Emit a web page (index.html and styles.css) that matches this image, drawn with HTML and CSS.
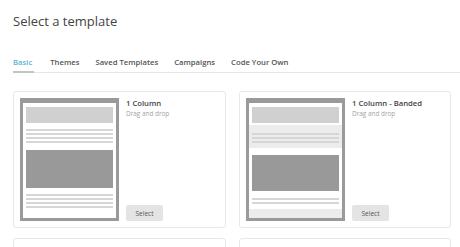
FILE: index.html
```html
<!DOCTYPE html>
<html>
<head>
<meta charset="utf-8">
<link rel="stylesheet" href="styles.css">
</head>
<body>
<h1 class="title">Select a template</h1>
<nav class="tabs">
  <span class="tab active">Basic</span>
  <span class="tab">Themes</span>
  <span class="tab">Saved Templates</span>
  <span class="tab">Campaigns</span>
  <span class="tab">Code Your Own</span>
</nav>
<div class="grid">
  <div class="card">
    <div class="thumb">
      <div class="inner">
        <div class="hdr"></div>
        <div class="lines top"><i></i><i></i><i></i><i></i></div>
        <div class="img"></div>
        <div class="lines bottom"><i></i><i></i><i></i><i></i></div>
      </div>
    </div>
    <div class="info">
      <div class="name">1 Column</div>
      <div class="desc">Drag and drop</div>
      <button class="select">Select</button>
    </div>
  </div>
  <div class="card">
    <div class="thumb">
      <div class="inner banded">
        <div class="hdr"></div>
        <div class="band"><div class="lines"><i></i><i></i><i></i></div></div>
        <div class="img b"></div>
        <div class="lines bottom2"><i></i><i></i></div>
        <div class="band foot"></div>
      </div>
    </div>
    <div class="info">
      <div class="name">1 Column - Banded</div>
      <div class="desc">Drag and drop</div>
      <button class="select">Select</button>
    </div>
  </div>
  <div class="card empty"></div>
  <div class="card empty"></div>
</div>
</body>
</html>
```
FILE: styles.css
```css
html, body {
  margin: 0;
  background: #fff;
}
body {
  padding: 0 0 0 13px;
  font-family: "Open Sans", "DejaVu Sans", sans-serif;
  color: #444;
  overflow: hidden;
}
.title {
  margin: 11px 0 0;
  font-size: 13px;
  line-height: 20px;
  font-weight: 400;
  color: #444;
}
.tabs {
  display: flex;
  margin-top: 25px;
  border-bottom: 1px solid #e6e6e6;
}
.tab {
  font-size: 7.7px;
  line-height: 12px;
  font-weight: 600;
  color: #555;
  padding-bottom: 4px;
  margin-right: 16px;
}
.tab.active {
  color: #5bb4cf;
  border-bottom: 2px solid #c4c4c4;
  margin-bottom: -1px;
  padding-bottom: 3px;
  padding-right: 2px;
}
.grid {
  display: grid;
  grid-template-columns: 213px 212px;
  column-gap: 13px;
  row-gap: 10px;
  margin-top: 18px;
}
.card {
  display: flex;
  gap: 7px;
  border: 1px solid #e8e8e8;
  border-radius: 3px;
  padding: 6px;
}
.card.empty {
  height: 123px;
}
.thumb {
  width: 99px;
  height: 123px;
  box-sizing: border-box;
  border: 3px solid #9a9a9a;
  border-top-width: 5px;
  flex: none;
}
.inner {
  height: 100%;
  background: #fff;
  padding: 4px 3px 0;
  box-sizing: border-box;
}
.hdr {
  height: 16px;
  background: #d0d0d0;
}
.lines {
  display: flex;
  flex-direction: column;
  gap: 2px;
}
.lines i {
  display: block;
  height: 2px;
  background: #d6d6d6;
}
.lines.top { margin-top: 6px; }
.img {
  height: 38px;
  background: #999;
  margin-top: 7px;
}
.lines.bottom { margin-top: 6px; }
.inner.banded {
  padding: 4px 0 0;
  display: flex;
  flex-direction: column;
}
.banded .hdr { margin: 0 3px; }
.band {
  background: #ececec;
  margin-top: 2px;
  height: 23px;
  padding: 8px 3px 0;
  box-sizing: border-box;
}
.img.b { margin: 7px 3px 0; height: 36px; }
.lines.bottom2 { margin: 7px 3px 0; }
.band.foot {
  margin-top: auto;
  height: 9px;
  padding: 0;
}
.info {
  display: flex;
  flex-direction: column;
  flex: 1;
  align-items: flex-start;
}
.name {
  font-size: 7.7px;
  line-height: 11px;
  font-weight: 600;
  color: #444;
}
.desc {
  font-size: 6.4px;
  line-height: 10px;
  color: #a3a3a3;
}
.select {
  margin-top: auto;
  width: 37px;
  height: 16px;
  border: none;
  border-radius: 2px;
  background: #e4e4e4;
  font-family: "Open Sans", "DejaVu Sans", sans-serif;
  font-size: 6.5px;
  color: #555;
  padding: 0;
}
```
